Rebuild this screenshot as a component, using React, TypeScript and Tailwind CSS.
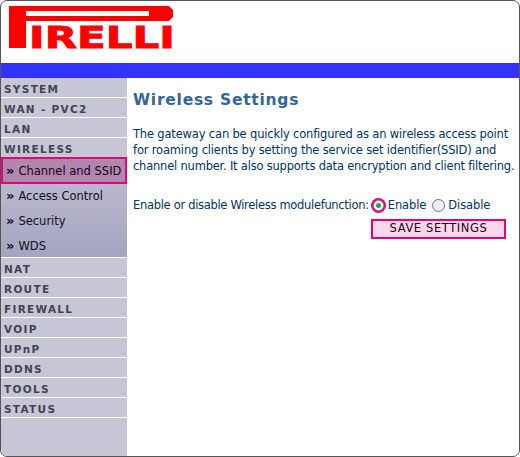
const NavItem = ({ label }: { label: string }) => (
  <div className="h-5 border-b border-white pl-[3px] pt-[5px] text-[10.5px] leading-[13px] font-bold tracking-[1.3px] text-[#444450]">
    {label}
  </div>
)

const SubItem = ({ label, active }: { label: string; active?: boolean }) => (
  <div
    className={
      active
        ? "h-[27px] border-2 border-[#e6007a] bg-[#b088ae] pl-[3px] pt-[5px] text-[11.5px] leading-[15px] text-[#200020]"
        : "h-[25px] pl-[5px] pt-[5px] text-[11.5px] leading-[15px] text-[#101020]"
    }
  >
    <span className="mr-[4px] text-[13px] leading-[13px] font-bold">»</span>
    {label}
  </div>
)

const Logo = () => (
  <svg width="166" height="50" viewBox="0 0 166 50" className="block">
    <path
      fill="#ff0000"
      fillRule="evenodd"
      d="M0 0H160L164 4V11L160 15H17V42H0ZM17 5V10H140V5Z"
    />
    <text
      x="20"
      y="42"
      textLength="146"
      lengthAdjust="spacingAndGlyphs"
      fill="#ff0000"
      stroke="#ff0000"
      strokeWidth="0.8"
      fontFamily="'DejaVu Sans', sans-serif"
      fontWeight="700"
      fontSize="29.5"
    >
      IRELLI
    </text>
  </svg>
)

export default function App() {
  return (
    <div className="h-[457px] w-[520px] overflow-hidden rounded-[7px] border border-[#555555] bg-white font-['DejaVu_Sans',sans-serif]">
      <div className="h-[62px] pl-[8px] pt-[5px]">
        <Logo />
      </div>
      <div className="h-[15px] bg-[#3333ff]" />
      <div className="flex h-[378px]">
        <div className="w-[126px] shrink-0 bg-[#c6c6d6]">
          <NavItem label="SYSTEM" />
          <NavItem label="WAN - PVC2" />
          <NavItem label="LAN" />
          <div className="h-[19px] pl-[3px] pt-[5px] text-[10.5px] leading-[13px] font-bold tracking-[1.3px] text-[#444450]">
            WIRELESS
          </div>
          <div className="h-[101px] border-b border-white bg-gradient-to-b from-[#c2bfd2] to-[#a3a5bf]">
            <SubItem label="Channel and SSID" active />
            <SubItem label="Access Control" />
            <SubItem label="Security" />
            <SubItem label="WDS" />
          </div>
          <NavItem label="NAT" />
          <NavItem label="ROUTE" />
          <NavItem label="FIREWALL" />
          <NavItem label="VOIP" />
          <NavItem label="UPnP" />
          <NavItem label="DDNS" />
          <NavItem label="TOOLS" />
          <NavItem label="STATUS" />
        </div>
        <div className="flex-1 pl-[6px] pt-[12px] text-[#003366]">
          <h1 className="text-[15.5px] leading-[20px] font-bold tracking-[0.75px] text-[#336699]">Wireless Settings</h1>
          <p className="mt-[16px] w-[386px] text-[11.5px] leading-4 tracking-[-0.17px]">
            The gateway can be quickly configured as an wireless access point<br />
            for roaming clients by setting the service set identifier(SSID) and<br />
            <span className="tracking-[-0.21px]">channel number. It also supports data encryption and client filtering.</span>
          </p>
          <div className="mt-[23px] flex h-4 items-center text-[11.5px] leading-4 tracking-[-0.1px]">
            <span className="tracking-[-0.31px]">Enable or disable Wireless modulefunction:</span>
            <span className="ml-[2px] flex h-[15px] w-[15px] items-center justify-center rounded-full bg-[#e6007a]">
              <span className="flex h-[11px] w-[11px] items-center justify-center rounded-full border border-[#7b8ea3] bg-white">
                <span className="h-[5px] w-[5px] rounded-full bg-[#22a83c]" />
              </span>
            </span>
            <span className="ml-[2px]">Enable</span>
            <span className="ml-[6px] h-[13px] w-[13px] rounded-full border border-[#5a7a9a] bg-[#eef0f4]" />
            <span className="ml-[3px]">Disable</span>
          </div>
          <div className="mt-[6px] ml-[238px] flex h-[20px] w-[135px] items-center justify-center border-2 border-[#e6007a] bg-[#fbd6ea] text-[11.5px] tracking-[0.6px] text-[#200020]">
            SAVE SETTINGS
          </div>
        </div>
      </div>
    </div>
  )
}
